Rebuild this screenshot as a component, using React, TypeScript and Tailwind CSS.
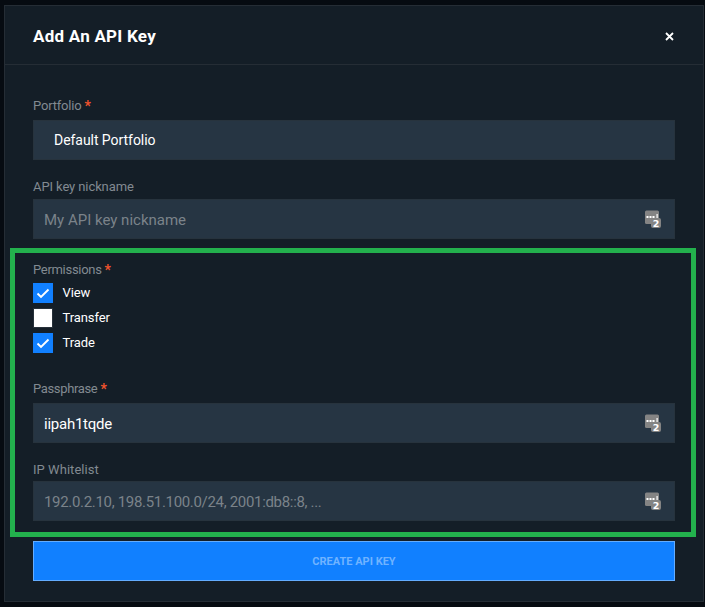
import type { ReactNode } from "react";

function Label({
  children,
  required = false,
  tracking = "tracking-[-0.1px]",
}: {
  children: ReactNode;
  required?: boolean;
  tracking?: string;
}) {
  return (
    <div className="flex h-5 items-center gap-[3px] pt-0.5 text-[13px] leading-5 text-[#828a91]">
      <span className={tracking}>{children}</span>
      {required && <span className="text-[14px] font-bold leading-5 text-[#f0532d]">*</span>}
    </div>
  );
}

function ManagerIcon() {
  return (
    <svg width="17" height="19" viewBox="0 0 17 19" className="shrink-0">
      <rect x="0" y="0.5" width="14" height="13.5" rx="1.5" fill="#848484" />
      <path d="M1.5 6h2v2h-2zM4.5 6h2v2h-2zM7.5 6h2v2h-2zM11.5 4h1.2v4h-1.2z" fill="#fff" />
      <rect x="6" y="8" width="10" height="10" rx="2" fill="#848484" />
      <text x="11" y="16.6" textAnchor="middle" fill="#fff" fontSize="9.5" fontWeight="700" fontFamily="DejaVu Sans, sans-serif">2</text>
    </svg>
  );
}

function Field({ children, padding = "pl-2.5" }: { children: ReactNode; padding?: string }) {
  return (
    <div className={`flex h-10 items-center justify-between border border-[#27333d] bg-[#263543] pr-3 ${padding}`}>
      {children}
    </div>
  );
}

function Check({ label, checked = false }: { label: string; checked?: boolean }) {
  return (
    <div className="flex h-5 items-center gap-[9.5px] text-[13px] leading-5 text-white">
      {checked ? (
        <span className="flex size-5 items-center justify-center bg-[#1180ff]">
          <svg width="20" height="20" viewBox="0 0 20 20" fill="none">
            <path d="M4.5 10.5 8 14 15.5 6.5" stroke="#fff" strokeWidth="1.9" />
          </svg>
        </span>
      ) : (
        <span className="size-5 border border-[#27313a] bg-white" />
      )}
      <span className="tracking-[-0.1px]">{label}</span>
    </div>
  );
}

export default function App() {
  return (
    <div className="relative h-[607px] w-[705px] bg-[#060b11] pl-1 pt-[5px] font-[Roboto,sans-serif]">
      <div className="h-[597px] w-[700px] border border-[#252d35] bg-[#141e27]">
        <header className="flex h-[59px] items-center justify-between border-b border-[#252d35] pl-7 pr-[29px]">
          <h1 className="pt-0.5 text-[17px] font-bold leading-6 tracking-[0.25px] text-white">Add An API Key</h1>
          <svg width="9" height="9" viewBox="0 0 9 9" className="mt-0.5" aria-label="Close">
            <path d="M1 1 8 8M8 1 1 8" stroke="#fff" strokeWidth="1.8" />
          </svg>
        </header>
        <form className="flex flex-col px-7 pt-[30px]">
          <Label required tracking="tracking-[-0.2px]">Portfolio</Label>
          <div className="mt-[5px]">
            <Field padding="pl-5">
              <span className="text-sm tracking-[-0.05px] text-white">Default Portfolio</span>
            </Field>
          </div>
          <div className="mt-4"><Label>API key nickname</Label></div>
          <div className="mt-[3px]">
            <Field>
              <span className="pt-0.5 text-[15px] text-[#7b838a]">My API key nickname</span>
              <ManagerIcon />
            </Field>
          </div>
          <div className="mt-5"><Label required tracking="tracking-[-0.3px]">Permissions</Label></div>
          <div className="mt-1 flex flex-col gap-[5px]">
            <Check label="View" checked />
            <Check label="Transfer" />
            <Check label="Trade" checked />
          </div>
          <div className="mt-[25px]"><Label required tracking="tracking-[-0.35px]">Passphrase</Label></div>
          <div className="mt-[5px]">
            <Field>
              <span className="pt-0.5 text-[15px] tracking-[-0.25px] text-white">iipah1tqde</span>
              <ManagerIcon />
            </Field>
          </div>
          <div className="mt-4"><Label tracking="tracking-[0.05px]">IP Whitelist</Label></div>
          <div className="mt-[2px]">
            <Field>
              <span className="pt-0.5 text-[15px] tracking-[-0.32px] text-[#7b838a]">192.0.2.10, 198.51.100.0/24, 2001:db8::8, ...</span>
              <ManagerIcon />
            </Field>
          </div>
          <button type="button" className="mt-5 h-10 border border-[#64adff] bg-[#1180ff] pt-0.5 text-[11px] font-bold text-[#70b3ff]">
            CREATE API KEY
          </button>
        </form>
      </div>
      <div className="pointer-events-none absolute left-[10px] top-[248px] h-[289px] w-[686px] border-[5px] border-[#23b14d]" />
    </div>
  );
}
